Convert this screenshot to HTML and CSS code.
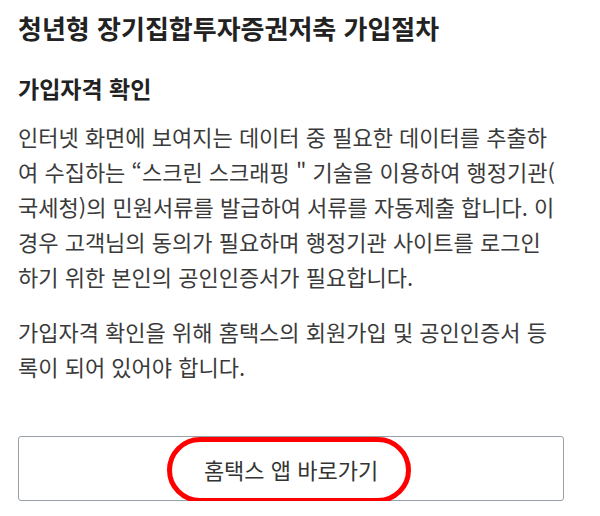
FILE: index.html
```html
<!DOCTYPE html>
<html lang="ko">
<head>
<meta charset="UTF-8">
<meta name="viewport" content="width=device-width, initial-scale=1.0">
<title>가입절차</title>
<link rel="stylesheet" href="styles.css">
</head>
<body>

<div class="wrap">
  <h1 class="title">청년형 장기집합투자증권저축 가입절차</h1>
  <h2 class="sub">가입자격 확인</h2>
  <div class="desc">
    <p>인터넷 화면에 보여지는 데이터 중 필요한 데이터를 추출하<br>여 수집하는 “스크린 스크래핑 " 기술을 이용하여 행정기관(<br>국세청)의 민원서류를 발급하여 서류를 자동제출 합니다. 이<br>경우 고객님의 동의가 필요하며 행정기관 사이트를 로그인<br>하기 위한 본인의 공인인증서가 필요합니다.</p>
    <p>가입자격 확인을 위해 홈택스의 회원가입 및 공인인증서 등<br>록이 되어 있어야 합니다.</p>
  </div>
  <a class="btn" href="#">
    홈택스 앱 바로가기
    <span class="mark"></span>
  </a>
</div>

</body>
</html>
```

FILE: styles.css
```css
*{
  margin: 0;
  padding: 0;
  box-sizing: border-box;
}
body{
  background: #fff;
  font-family: "Noto Sans CJK KR", "Noto Sans", sans-serif;
  color: #333;
}
.wrap{
  width: 582px;
  padding: 0 18px;
}
.title{
  margin-top: 10px;
  font-size: 26px;
  line-height: 36px;
  font-weight: bold;
  color: #222;
}
.sub{
  margin-top: 27px;
  font-size: 23px;
  line-height: 30px;
  font-weight: bold;
  color: #222;
}
.desc{
  margin-top: 16px;
  font-size: 22px;
  line-height: 35px;
  color: #3a3a3a;
  white-space: nowrap;
}
.desc p + p{
  margin-top: 20px;
}
.btn{
  display: flex;
  align-items: center;
  justify-content: center;
  position: relative;
  height: 65px;
  margin-top: 52px;
  border: 1.5px solid #9aa0a8;
  border-radius: 3px;
  font-size: 22px;
  color: #333;
  text-decoration: none;
}
/* 빨간 표시 */
.mark{
  position: absolute;
  left: 148px;
  top: 0;
  width: 244px;
  height: 66px;
  border: 5px solid #f00;
  border-radius: 33px;
}
```
